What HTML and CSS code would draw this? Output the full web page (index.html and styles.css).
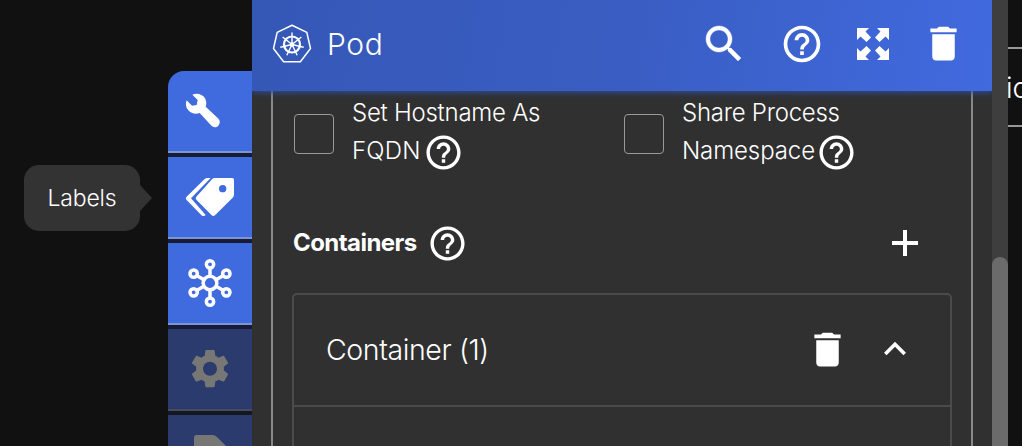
FILE: index.html
```html
<!DOCTYPE html>
<html lang="en">
<head>
<meta charset="utf-8">
<title>Pod</title>
<link rel="stylesheet" href="styles.css">
</head>
<body>
<svg class="defs" aria-hidden="true">
  <symbol id="help" viewBox="0 0 24 24"><path d="M11 18h2v-2h-2v2zm1-16C6.480 2 2 6.480 2 12s4.480 10 10 10 10-4.480 10-10S17.520 2 12 2zm0 18c-4.410 0-8-3.590-8-8s3.590-8 8-8 8 3.590 8 8-3.590 8-8 8zm0-14c-2.210 0-4 1.790-4 4h2c0-1.100.9-2 2-2s2 .9 2 2c0 2-3 1.750-3 5h2c0-2.250 3-2.500 3-5 0-2.210-1.790-4-4-4z"/></symbol>
  <symbol id="trash" viewBox="0 0 24 24"><path d="M6 19c0 1.100.9 2 2 2h8c1.100 0 2-.9 2-2V7H6v12zM19 4h-3.500l-1-1h-5l-1 1H5v2h14V4z"/></symbol>
</svg>
<div class="app">
  <aside class="side">
    <div class="tooltip">Labels</div>
  </aside>
  <nav class="tabs">
    <div class="tab first"><svg viewBox="24 33 252 240"><path d="M97 104C111 98 128 103 135 115C140 124 140 133 137 140L174 175C181 182 181 190 175 197C168 204 160 203 153 196L119 159C108 164 93 161 85 151C77 142 76 131 80 121L96 137L110 135L113 120Z"/></svg></div>
    <div class="tab"><svg viewBox="504 51 252 240"><path fill-rule="evenodd" d="M644 114H697Q702 114 702 119V164Q702 169 698 173L645 226Q640 230 635 226L589 179Q585 175 589 170L636 118Q640 114 644 114ZM679 146A11 11 0 1 0 657 146A11 11 0 1 0 679 146Z"/><path d="M620 114H632L573 175L617 225Q613 230 606 227L559 179Q556 175 559 171L614 117Z"/></svg></div>
    <div class="tab"><svg viewBox="24 39 252 240"><g fill="none" stroke="#fff" stroke-width="10.500"><circle cx="150" cy="159" r="20.500"/><circle cx="150" cy="103" r="11"/><circle cx="101" cy="131" r="11"/><circle cx="199" cy="131" r="11"/><circle cx="101" cy="187" r="11"/><circle cx="199" cy="187" r="11"/><circle cx="150" cy="215" r="11"/><path d="M150 114V139M150 179V204M111 137L132 149M189 137L168 149M111 181L132 169M189 181L168 169"/></g></svg></div>
    <div class="tab off"><svg viewBox="24 297 252 240"><path transform="translate(80.400 346.400) scale(5.800)" d="M19.140 12.940c.04-.3.06-.61.06-.94 0-.32-.02-.64-.07-.94l2.030-1.580c.18-.14.23-.41.12-.61l-1.920-3.320c-.12-.22-.37-.29-.59-.22l-2.390.96c-.5-.38-1.030-.7-1.620-.94l-.36-2.540c-.04-.24-.24-.41-.48-.41h-3.840c-.24 0-.43.17-.47.41l-.36 2.540c-.59.24-1.130.57-1.620.94l-2.390-.96c-.22-.08-.47 0-.59.22L2.740 8.870c-.12.21-.08.47.12.61l2.030 1.580c-.05.3-.09.63-.09.94s.02.64.07.94l-2.030 1.580c-.18.14-.23.41-.12.61l1.920 3.320c.12.22.37.29.59.22l2.390-.96c.5.38 1.030.7 1.620.94l.36 2.540c.05.24.24.41.48.41h3.840c.24 0 .44-.17.47-.41l.36-2.540c.59-.24 1.130-.56 1.620-.94l2.390.96c.22.08.47 0 .59-.22l1.920-3.320c.12-.22.07-.47-.12-.61l-2.010-1.580zM12 15.600c-1.980 0-3.600-1.620-3.600-3.600s1.620-3.600 3.600-3.600 3.600 1.620 3.600 3.600-1.620 3.600-3.600 3.600z"/></svg></div>
    <div class="tab off"><svg viewBox="24 555 252 240"><path d="M110 615H158Q165 615 170 620L203 653V740H102V623Q102 615 110 615Z"/></svg></div>
  </nav>
  <main class="panel">
    <header class="head">
      <svg class="logo" viewBox="0 0 40 40"><g fill="none" stroke="#fff"><path stroke-width="1.500" stroke-linejoin="round" d="M20 1.300L34.800 8.400L38.500 24.500L28.400 37.700H11.600L1.500 24.500L5.200 8.400Z"/><circle cx="20" cy="20.500" r="8" stroke-width="2.200"/><path stroke-width="1.400" d="M20 20.500V8.500M20 20.500L29.400 13M20 20.500L31.700 23.200M20 20.500L25.200 31.300M20 20.500L14.800 31.300M20 20.500L8.300 23.200M20 20.500L10.600 13"/></g><circle cx="20" cy="20.500" r="2.300" fill="#fff"/></svg>
      <h1 class="title">Pod</h1>
      <div class="actions">
        <svg class="i-search" viewBox="0 0 24 24"><path d="M15.500 14h-.79l-.28-.27C15.410 12.590 16 11.110 16 9.500 16 5.910 13.090 3 9.500 3S3 5.910 3 9.500 5.910 16 9.500 16c1.610 0 3.090-.59 4.230-1.570l.27.28v.79l5 4.990L20.490 19l-4.990-5zm-6 0C7.010 14 5 11.990 5 9.500S7.010 5 9.500 5 14 7.010 14 9.500 11.990 14 9.500 14z"/></svg>
        <svg class="i-help"><use href="#help"/></svg>
        <svg class="i-full" viewBox="0 0 32 32"><path d="M0 0H12L8.500 3.500L14 9.500L9.500 14L3.500 8.500L0 12ZM32 0V12L28.500 8.500L22.500 14L18 9.500L23.500 3.500L20 0ZM0 32V20L3.500 23.500L9.500 18L14 22.500L8.500 28.500L12 32ZM32 32H20L23.500 28.500L18 22.500L22.500 18L28.500 23.500L32 20Z"/></svg>
        <svg class="i-trash"><use href="#trash"/></svg>
      </div>
    </header>
    <section class="body">
      <div class="checks">
        <label class="check"><span class="box"></span><span class="label"><span class="l1">Set Hostname As</span><span class="line"><span class="l2">FQDN</span><svg class="q"><use href="#help"/></svg></span></span></label>
        <label class="check"><span class="box"></span><span class="label"><span class="l3">Share Process</span><span class="line"><span class="l4">Namespace</span><svg class="q"><use href="#help"/></svg></span></span></label>
      </div>
      <div class="group">
        <h2 class="group-title">Containers</h2>
        <svg class="q"><use href="#help"/></svg>
        <svg class="plus" viewBox="0 0 26 26"><path d="M11 0h4v11h11v4H15v11h-4V15H0v-4h11z"/></svg>
      </div>
      <div class="card">
        <div class="card-head">
          <span class="card-title">Container (1)</span>
          <svg class="i-trash"><use href="#trash"/></svg>
          <svg class="chev" viewBox="0 0 24 24"><path d="M12 8l-6 6 1.410 1.410L12 10.830l4.590 4.580L18 14z"/></svg>
        </div>
      </div>
    </section>
  </main>
  <div class="scroll"><div class="thumb"></div></div>
  <div class="behind"><div class="field">io</div></div>
</div>
</body>
</html>
```

FILE: styles.css
```css
* { box-sizing: border-box; }
body { margin: 0; background: #111; color: #fff; font-family: Inter, "Liberation Sans", sans-serif; font-weight: 300; }
svg { display: block; flex: none; fill: #fff; }
.defs { display: none; }
.app { display: flex; width: 1022px; height: 446px; overflow: hidden; }

.side { width: 168px; padding: 165px 0 0 24px; }
.tooltip { position: relative; width: 116px; height: 66px; border-radius: 15px; background: #333; font-size: 23px; line-height: 66px; text-align: center; letter-spacing: -0.2px; }
.tooltip::after { content: ""; position: absolute; left: 116px; top: 20px; border: 13px solid transparent; border-left: 12px solid #333; border-right: 0; }

.tabs { width: 84px; padding-top: 71px; display: flex; flex-direction: column; gap: 4px; }
.tab { flex: none; height: 82px; background: #406bdf; border-bottom: 2px solid #7c94d4; box-shadow: 0 4px #161c33; }
.tab svg { width: 84px; height: 80px; }
.tab.first { border-top-left-radius: 16px; }
.tab.off { background: #2b3b6e; border-color: #484c60; box-shadow: 0 4px #151720; }
.tab.off svg { fill: #777876; }

.panel { width: 740px; background: #303030; display: flex; flex-direction: column; }
.head { position: relative; flex: none; height: 91px; padding: 0 26px 4px 20px; display: flex; align-items: center; background: linear-gradient(100deg, #3558b7, #395dc2 50%, #416adf); box-shadow: 0 1px 7px #3051a8; clip-path: inset(0 0 -10px 0); }
.logo { width: 40px; height: 40px; }
.title { margin: 0 0 0 15px; font-size: 30px; font-weight: 300; letter-spacing: 0.6px; line-height: 40px; }
.actions { margin-left: auto; display: flex; align-items: center; }
.i-search { width: 48px; height: 48px; margin-right: 32px; stroke: #fff; stroke-width: 0.2; }
.i-help { width: 44px; height: 44px; margin-right: 33px; }
.i-full { width: 32px; height: 32px; margin-right: 32.500px; }
.i-trash { width: 45px; height: 45px; }

.body { flex: 1; margin: 0 19px; padding: 3px 19px 0 19px; border: solid #888; border-width: 0 2px; }
.checks { display: flex; }
.check { display: flex; width: 330px; padding-left: 2px; }
.box { width: 40px; height: 40px; margin-top: 20px; border: 1px solid #999; border-radius: 4px; }
.label { margin-left: 18px; display: flex; flex-direction: column; font-size: 24px; line-height: 38px; white-space: nowrap; }
.line { display: flex; height: 38px; }
.q { width: 41px; height: 41px; }
.l1, .l3 { letter-spacing: -0.25px; }
.l2 { margin-right: 2px; letter-spacing: 0.2px; }
.l4 { letter-spacing: -0.1px; margin-right: 1px; }
.group { display: flex; align-items: center; height: 46px; margin-top: 50px; padding-right: 34px; }
.group-title { margin: 0 0 0 1px; font-size: 24px; line-height: 32px; font-weight: 700; letter-spacing: -0.55px; }
.group .q { margin-left: 10px; }
.plus { width: 26px; height: 26px; margin-left: auto; }
.card { width: 660px; height: 160px; margin-top: 27px; border: 2px solid #4b4b4b; border-radius: 5px; }
.card-head { height: 112px; display: flex; align-items: center; padding: 0 33px 2px 32px; border-bottom: 2px solid #4b4b4b; }
.card-title { margin-right: auto; font-size: 28.500px; letter-spacing: -0.4px; }
.card-head .i-trash { margin-right: 23px; }
.chev { width: 44px; height: 44px; }

.scroll { width: 16px; padding-top: 257px; background: #3e3e3e; }
.thumb { height: 260px; border-radius: 8px; background: #6b6b6b; }
.behind { width: 14px; padding-top: 47px; overflow: hidden; }
.field { height: 80px; border: solid #999; border-width: 2px 0; font-size: 28px; line-height: 78px; font-weight: 300; text-indent: -2px; }
```
